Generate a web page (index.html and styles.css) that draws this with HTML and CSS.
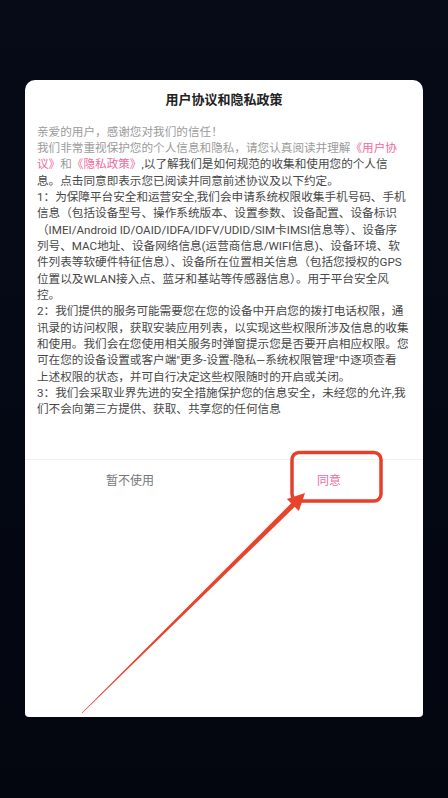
FILE: index.html
```html
<!DOCTYPE html>
<html lang="zh-CN">
<head>
<meta charset="utf-8">
<title>用户协议和隐私政策</title>
<link rel="stylesheet" href="styles.css">
</head>
<body>
<div class="page">
  <div class="dialog">
    <h1 class="title">用户协议和隐私政策</h1>
    <div class="content">
      <p><span class="muted">亲爱的用户，感谢您对我们的信任！<br>我们非常重视保护您的个人信息和隐私，请您认真阅读并理解</span><span class="link">《用户协<br>议》</span><span class="muted">和</span><span class="link">《隐私政策》</span>,以了解我们是如何规范的收集和使用您的个人信<br>息。点击同意即表示您已阅读并同意前述协议及以下约定。</p>
      <p>1：为保障平台安全和运营安全,我们会申请系统权限收集手机号码、手机<br>信息（包括设备型号、操作系统版本、设置参数、设备配置、设备标识<br>（IMEI/Android ID/OAID/IDFA/IDFV/UDID/SIM卡IMSI信息等）、设备序<br>列号、MAC地址、设备网络信息(运营商信息/WIFI信息)、设备环境、软<br>件列表等软硬件特征信息）、设备所在位置相关信息（包括您授权的GPS<br>位置以及WLAN接入点、蓝牙和基站等传感器信息）。用于平台安全风<br>控。</p>
      <p>2：我们提供的服务可能需要您在您的设备中开启您的拨打电话权限，通<br>讯录的访问权限，获取安装应用列表，以实现这些权限所涉及信息的收集<br>和使用。我们会在您使用相关服务时弹窗提示您是否要开启相应权限。您<br>可在您的设备设置或客户端"更多-设置-隐私—系统权限管理"中逐项查看<br>上述权限的状态，并可自行决定这些权限随时的开启或关闭。</p>
      <p>3：我们会采取业界先进的安全措施保护您的信息安全，未经您的允许,我<br>们不会向第三方提供、获取、共享您的任何信息</p>
    </div>
    <div class="actions">
      <button class="btn btn-cancel" type="button">暂不使用</button>
      <button class="btn btn-agree" type="button">同意</button>
    </div>
  </div>
</div>
<svg class="annotation" width="448" height="798" viewBox="0 0 448 798" aria-hidden="true">
  <rect x="292" y="452.5" width="89" height="48.5" rx="7" ry="7" fill="none" stroke="#e5402b" stroke-width="3.5"/>
  <polygon points="81.8,712.8 292.2,502.2 295.8,505.8 82.2,713.2" fill="#e8432d"/>
  <polygon points="305,493 298.9,511 286.9,498.9" fill="#e8432d"/>
</svg>
</body>
</html>
```
FILE: styles.css
```css
html, body {
  margin: 0;
  padding: 0;
}
body {
  width: 448px;
  height: 798px;
  overflow: hidden;
  background: linear-gradient(180deg, #070b18 0%, #050915 40%, #03060f 100%);
  font-family: Roboto, "Noto Sans CJK SC", sans-serif;
  position: relative;
}
.page {
  padding: 80px 25px 0;
}
.dialog {
  width: 398px;
  height: 637px;
  background: #ffffff;
  border-radius: 10px 10px 4px 4px;
  overflow: hidden;
  display: flex;
  flex-direction: column;
}
.title {
  margin: 0;
  padding-top: 10px;
  font-size: 13px;
  line-height: 19px;
  font-weight: 700;
  color: #222222;
  text-align: center;
}
.content {
  margin-top: 14.5px;
  padding: 0 12px;
  font-size: 11.62px;
  line-height: 16.35px;
  color: #484848;
  white-space: nowrap;
}
.content p {
  margin: 0;
}
.muted {
  color: #9b9b9b;
}
.link {
  color: #ef6aa0;
}
.actions {
  margin-top: 41.2px;
  border-top: 1px solid #f1f1f1;
  display: flex;
  flex-wrap: nowrap;
}
.btn {
  flex: 0 0 199px;
  height: 39px;
  border: 0;
  background: transparent;
  padding: 0;
  font-family: Roboto, "Noto Sans CJK SC", sans-serif;
  font-size: 12px;
}
.btn-cancel {
  margin-left: 5.5px;
  color: #777777;
}
.btn-agree {
  color: #ee6b9f;
}
.annotation {
  position: absolute;
  top: 0;
  left: 0;
  pointer-events: none;
}
```
